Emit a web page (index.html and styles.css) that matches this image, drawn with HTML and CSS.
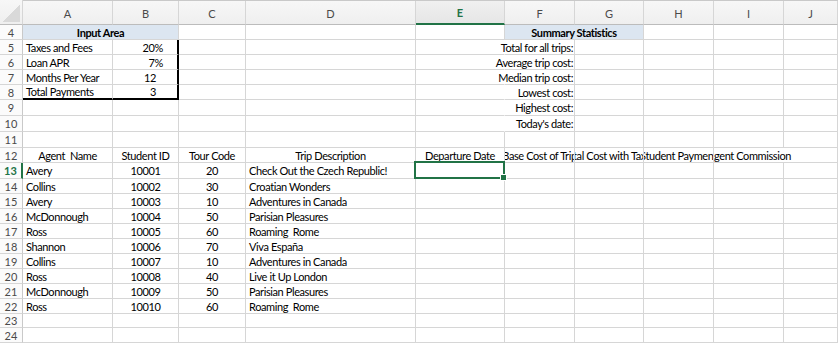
FILE: index.html
```html
<!DOCTYPE html>
<html lang="en">
<head>
    <meta charset="UTF-8">
    <meta name="viewport" content="width=device-width, initial-scale=1.0">
    <title>Travel Agency Workbook</title>
    <link rel="stylesheet" href="styles.css">
</head>
<body>
    <div class="sheet" id="sheet"></div>

    <script>
        const colNames = ["A", "B", "C", "D", "E", "F", "G", "H", "I", "J"];
        const firstRow = 4;
        const lastRow = 25;

        const agents = ["Avery", "Collins", "Avery", "McDonnough", "Ross", "Shannon", "Collins", "Ross", "McDonnough", "Ross"];
        const tours = [20, 30, 10, 50, 60, 70, 10, 40, 50, 60];
        const trips = [
            "Check Out the Czech Republic!",
            "Croatian Wonders",
            "Adventures in Canada",
            "Parisian Pleasures",
            "Roaming  Rome",
            "Viva España",
            "Adventures in Canada",
            "Live it Up London",
            "Parisian Pleasures",
            "Roaming  Rome"
        ];

        const cells = {
            A4: { text: "Input Area", cls: "title", span: 2 },
            F4: { text: "Summary Statistics", cls: "title", span: 2 },
            A5: { text: "Taxes and Fees" },
            B5: { text: "20%", cls: "pct" },
            A6: { text: "Loan APR" },
            B6: { text: "7%", cls: "pct" },
            A7: { text: "Months Per Year" },
            B7: { text: "12", cls: "int" },
            A8: { text: "Total Payments" },
            B8: { text: "3", cls: "int" },
            F5: { text: "Total for all trips:", cls: "label" },
            F6: { text: "Average trip cost:", cls: "label" },
            F7: { text: "Median trip cost:", cls: "label" },
            F8: { text: "Lowest cost:", cls: "label" },
            F9: { text: "Highest cost:", cls: "label" },
            F10: { text: "Today's date:", cls: "label" },
            A12: { text: "Agent  Name", cls: "center" },
            B12: { text: "Student ID", cls: "center" },
            C12: { text: "Tour Code", cls: "center" },
            D12: { text: "Trip Description", cls: "center" },
            E12: { text: "Departure Date", cls: "center" },
            F12: { text: "Base Cost of Trip", cls: "center clip" },
            G12: { text: "Total Cost with Taxes", cls: "center clip" },
            H12: { text: "Student Payment", cls: "center clip" },
            I12: { text: "Agent Commission", cls: "tail", span: 2 }
        };

        agents.forEach((name, i) => {
            const row = 13 + i;
            cells["A" + row] = { text: name };
            cells["B" + row] = { text: String(10001 + i), cls: "center" };
            cells["C" + row] = { text: String(tours[i]), cls: "center" };
            cells["D" + row] = { text: trips[i] };
        });

        // the summary labels run left into column E
        for (let r = 5; r <= 10; r++) {
            cells["E" + r] = { cls: "open" };
        }
        for (let r = 4; r <= 8; r++) {
            cells["B" + r] = Object.assign({}, cells["B" + r], { edge: true });
        }
        cells.A8.base = true;
        cells.B8.base = true;
        cells.E13 = { cls: "active" };

        const sheet = document.getElementById("sheet");

        const addCell = (cls, text) => {
            const div = document.createElement("div");
            div.className = cls;
            if (text !== undefined) {
                const span = document.createElement("span");
                span.textContent = text;
                div.appendChild(span);
            }
            sheet.appendChild(div);
            return div;
        };

        // column header strip
        addCell("corner");
        colNames.forEach(c => addCell(c === "E" ? "col-head current" : "col-head", c));
        addCell("col-head filler");

        for (let r = firstRow; r <= lastRow; r++) {
            addCell(r === 13 ? "row-head current" : "row-head", String(r));
            let skip = 0;
            colNames.forEach(c => {
                if (skip > 0) { skip--; return; }
                const info = cells[c + r] || {};
                let cls = "cell";
                if (info.cls) cls += " " + info.cls;
                if (info.edge) cls += " edge";
                if (info.base) cls += " base";
                const div = addCell(cls, info.text);
                if (info.span) {
                    div.style.gridColumn = "span " + info.span;
                    skip = info.span - 1;
                }
            });
            addCell("cell filler");
        }
    </script>
</body>
</html>
```

FILE: styles.css
```css
body {
    margin: 0;
    background: #fff;
    font-family: Lato, "Open Sans", sans-serif;
    font-size: 11px;
    letter-spacing: -0.4px;
    color: #000;
    overflow: hidden;
}

.sheet {
    display: grid;
    grid-template-columns: 23px 90px 66px 67px 170px 89px 70px 69px 70px 70px 54px 1fr;
    grid-template-rows: 24px repeat(5, 15px) 16px 16px 16px 15px 16px repeat(9, 15px) 14px 15px 15px;
    border-top: 1px solid #c9c9c9;
}

/* headers */
.corner,
.col-head {
    background: linear-gradient(#f7f7f7, #efefef);
    border-right: 1px solid #d6d6d6;
    border-bottom: 1px solid #bcbcbc;
    color: #4a4a4a;
    display: flex;
    align-items: center;
    justify-content: center;
    padding-top: 1px;
    letter-spacing: 0;
}

.corner {
    margin-top: -1px;
    background:
        linear-gradient(135deg, transparent 50%, #d9d9d9 50%) no-repeat right 2px bottom 2px / 17px 17px,
        linear-gradient(#f7f7f7, #efefef);
}

.col-head.current {
    background: linear-gradient(#f0f0f0, #e6e6e6);
    border-bottom: 2px solid #217346;
    color: #217346;
    font-weight: bold;
}

.row-head {
    background: #fbfbfb;
    border-right: 1px solid #c9c9c9;
    border-bottom: 1px solid #d6d6d6;
    color: #4a4a4a;
    display: flex;
    align-items: center;
    justify-content: center;
    letter-spacing: 0;
}

.row-head.current {
    color: #217346;
    font-weight: bold;
    border-right: 2px solid #217346;
}

.filler {
    border-right: none;
}

/* cells */
.cell {
    border-right: 1px solid #d6d6d6;
    border-bottom: 1px solid #d6d6d6;
    display: flex;
    align-items: center;
    padding: 0 3px;
    white-space: pre;
    min-width: 0;
}

.cell.center {
    justify-content: center;
}

.cell.clip {
    overflow: hidden;
    padding: 0;
}

.cell.tail {
    overflow: hidden;
    padding: 0;
}

.cell.tail span {
    width: 70px;
    display: flex;
    justify-content: center;
    flex: none;
}

.cell.title {
    background: #dce6f1;
    justify-content: center;
    font-weight: bold;
}

.cell.label {
    justify-content: flex-end;
    padding-right: 1px;
}

.cell.open {
    border-right-color: transparent;
}

.cell.pct {
    justify-content: flex-end;
    padding-right: 14px;
}

.cell.int {
    justify-content: flex-end;
    padding-right: 21px;
}

.cell.edge {
    border-right: 2px solid #000;
}

.cell.base {
    border-bottom: 2px solid #000;
}

/* selected cell with fill handle */
.cell.active {
    position: relative;
}

.cell.active::before {
    content: "";
    position: absolute;
    left: -2px;
    top: -2px;
    right: -1px;
    bottom: -1px;
    border: 2px solid #217346;
}

.cell.active::after {
    content: "";
    position: absolute;
    right: -3px;
    bottom: -3px;
    width: 5px;
    height: 5px;
    background: #217346;
    border: 1px solid #fff;
}
```
